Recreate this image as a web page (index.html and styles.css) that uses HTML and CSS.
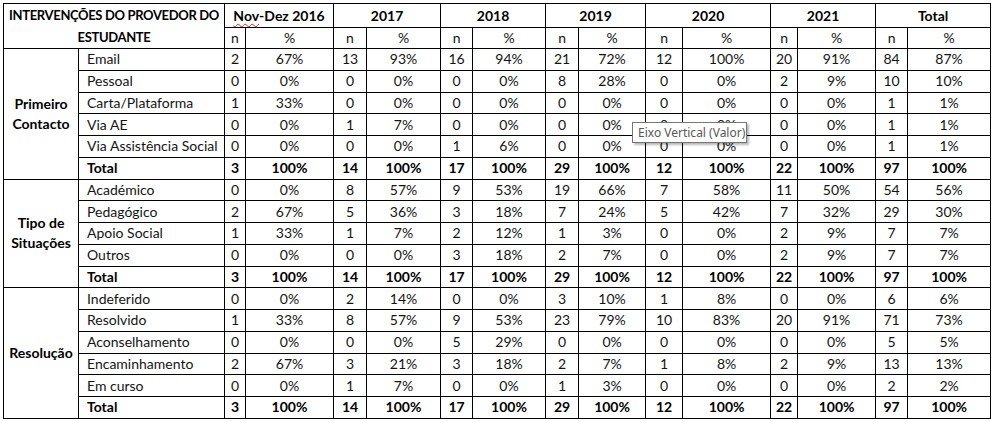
FILE: index.html
```html
<!DOCTYPE html>
<html lang="pt">
<head>
<meta charset="utf-8">
<title>Intervenções do Provedor do Estudante</title>
<link rel="stylesheet" href="styles.css">
</head>
<body>
<table class="grid">
  <colgroup>
    <col class="w-grp"><col class="w-lbl">
    <col class="w-n16"><col class="w-p16">
    <col class="w-n17"><col class="w-p17">
    <col class="w-n18"><col class="w-p18">
    <col class="w-n19"><col class="w-p19">
    <col class="w-n20"><col class="w-p20">
    <col class="w-n21"><col class="w-p21">
    <col class="w-nt"><col class="w-pt">
  </colgroup>
  <thead>
    <tr class="h1">
      <th class="title" colspan="2" rowspan="2">INTERVENÇÕES DO PROVEDOR DO<br>ESTUDANTE</th>
      <th colspan="2" class="yr"><span class="spell">Nov</span>-Dez 2016</th>
      <th colspan="2" class="yr">2017</th>
      <th colspan="2" class="yr">2018</th>
      <th colspan="2" class="yr">2019</th>
      <th colspan="2" class="yr">2020</th>
      <th colspan="2" class="yr">2021</th>
      <th colspan="2" class="yr">Total</th>
    </tr>
    <tr class="h2">
      <td class="sub sn">n</td><td class="sub sp">%</td>
      <td class="sub sn">n</td><td class="sub sp">%</td>
      <td class="sub sn">n</td><td class="sub sp">%</td>
      <td class="sub sn">n</td><td class="sub sp">%</td>
      <td class="sub sn">n</td><td class="sub sp">%</td>
      <td class="sub sn">n</td><td class="sub sp">%</td>
      <td class="sub sn">n</td><td class="sub sp">%</td>
    </tr>
  </thead>
  <tbody>
    <tr><th class="grp" rowspan="6">Primeiro<br>Contacto</th><td class="lbl">Email</td>
      <td>2</td><td>67%</td><td>13</td><td>93%</td><td>16</td><td>94%</td><td>21</td><td>72%</td><td>12</td><td>100%</td><td>20</td><td>91%</td><td>84</td><td>87%</td></tr>
    <tr><td class="lbl">Pessoal</td>
      <td>0</td><td>0%</td><td>0</td><td>0%</td><td>0</td><td>0%</td><td>8</td><td>28%</td><td>0</td><td>0%</td><td>2</td><td>9%</td><td>10</td><td>10%</td></tr>
    <tr><td class="lbl">Carta/Plataforma</td>
      <td>1</td><td>33%</td><td>0</td><td>0%</td><td>0</td><td>0%</td><td>0</td><td>0%</td><td>0</td><td>0%</td><td>0</td><td>0%</td><td>1</td><td>1%</td></tr>
    <tr><td class="lbl">Via AE</td>
      <td>0</td><td>0%</td><td>1</td><td>7%</td><td>0</td><td>0%</td><td>0</td><td>0%</td><td>0</td><td>0%</td><td>0</td><td>0%</td><td>1</td><td>1%</td></tr>
    <tr><td class="lbl">Via Assistência Social</td>
      <td>0</td><td>0%</td><td>0</td><td>0%</td><td>1</td><td>6%</td><td>0</td><td>0%</td><td>0</td><td>0%</td><td>0</td><td>0%</td><td>1</td><td>1%</td></tr>
    <tr class="tot"><td class="lbl">Total</td>
      <td>3</td><td>100%</td><td>14</td><td>100%</td><td>17</td><td>100%</td><td>29</td><td>100%</td><td>12</td><td>100%</td><td>22</td><td>100%</td><td>97</td><td>100%</td></tr>

    <tr><th class="grp" rowspan="5">Tipo de<br>Situações</th><td class="lbl">Académico</td>
      <td>0</td><td>0%</td><td>8</td><td>57%</td><td>9</td><td>53%</td><td>19</td><td>66%</td><td>7</td><td>58%</td><td>11</td><td>50%</td><td>54</td><td>56%</td></tr>
    <tr><td class="lbl">Pedagógico</td>
      <td>2</td><td>67%</td><td>5</td><td>36%</td><td>3</td><td>18%</td><td>7</td><td>24%</td><td>5</td><td>42%</td><td>7</td><td>32%</td><td>29</td><td>30%</td></tr>
    <tr><td class="lbl">Apoio Social</td>
      <td>1</td><td>33%</td><td>1</td><td>7%</td><td>2</td><td>12%</td><td>1</td><td>3%</td><td>0</td><td>0%</td><td>2</td><td>9%</td><td>7</td><td>7%</td></tr>
    <tr><td class="lbl">Outros</td>
      <td>0</td><td>0%</td><td>0</td><td>0%</td><td>3</td><td>18%</td><td>2</td><td>7%</td><td>0</td><td>0%</td><td>2</td><td>9%</td><td>7</td><td>7%</td></tr>
    <tr class="tot"><td class="lbl">Total</td>
      <td>3</td><td>100%</td><td>14</td><td>100%</td><td>17</td><td>100%</td><td>29</td><td>100%</td><td>12</td><td>100%</td><td>22</td><td>100%</td><td>97</td><td>100%</td></tr>

    <tr><th class="grp" rowspan="6">Resolução</th><td class="lbl">Indeferido</td>
      <td>0</td><td>0%</td><td>2</td><td>14%</td><td>0</td><td>0%</td><td>3</td><td>10%</td><td>1</td><td>8%</td><td>0</td><td>0%</td><td>6</td><td>6%</td></tr>
    <tr><td class="lbl">Resolvido</td>
      <td>1</td><td>33%</td><td>8</td><td>57%</td><td>9</td><td>53%</td><td>23</td><td>79%</td><td>10</td><td>83%</td><td>20</td><td>91%</td><td>71</td><td>73%</td></tr>
    <tr><td class="lbl">Aconselhamento</td>
      <td>0</td><td>0%</td><td>0</td><td>0%</td><td>5</td><td>29%</td><td>0</td><td>0%</td><td>0</td><td>0%</td><td>0</td><td>0%</td><td>5</td><td>5%</td></tr>
    <tr><td class="lbl">Encaminhamento</td>
      <td>2</td><td>67%</td><td>3</td><td>21%</td><td>3</td><td>18%</td><td>2</td><td>7%</td><td>1</td><td>8%</td><td>2</td><td>9%</td><td>13</td><td>13%</td></tr>
    <tr><td class="lbl">Em curso</td>
      <td>0</td><td>0%</td><td>1</td><td>7%</td><td>0</td><td>0%</td><td>1</td><td>3%</td><td>0</td><td>0%</td><td>0</td><td>0%</td><td>2</td><td>2%</td></tr>
    <tr class="tot"><td class="lbl">Total</td>
      <td>3</td><td>100%</td><td>14</td><td>100%</td><td>17</td><td>100%</td><td>29</td><td>100%</td><td>12</td><td>100%</td><td>22</td><td>100%</td><td>97</td><td>100%</td></tr>
  </tbody>
</table>
<div class="tooltip">Eixo Vertical (Valor)</div>
</body>
</html>
```

FILE: styles.css
```css
html, body {
  margin: 0;
  padding: 0;
  background: #ffffff;
}
body {
  position: relative;
  width: 993px;
  height: 421px;
  overflow: hidden;
  font-family: Lato, "Open Sans", "Liberation Sans", sans-serif;
  font-size: 14px;
  color: #141414;
}
.grid {
  border-collapse: collapse;
  table-layout: fixed;
  width: 987px;
  margin: 3px 0 0 3px;
}
.w-grp { width: 75px; }
.w-lbl { width: 146px; }
.w-n16 { width: 21px; }
.w-p16 { width: 88px; }
.w-n17 { width: 33px; }
.w-p17 { width: 74px; }
.w-n18 { width: 32px; }
.w-p18 { width: 73px; }
.w-n19 { width: 33px; }
.w-p19 { width: 67px; }
.w-n20 { width: 37px; }
.w-p20 { width: 88px; }
.w-n21 { width: 27px; }
.w-p21 { width: 78px; }
.w-nt { width: 32px; }
.w-pt { width: 83px; }

.grid th, .grid td {
  border: 1px solid #000;
  padding: 0;
  text-align: center;
  vertical-align: middle;
  white-space: nowrap;
  overflow: hidden;
  line-height: 20px;
}
.grid tbody tr { height: 21.75px; }
.h1 { height: 24px; }
.h2 { height: 20px; }
.grid th { font-weight: bold; color: #000; }
.grid th.title {
  line-height: 22px;
  font-size: 13px;
  letter-spacing: -0.35px;
}
.yr { border-bottom: none; }
.sub { border-top: none; }
.sp { border-left: none; }
.sn { border-right: none; }
.spell {
  text-decoration: underline wavy #e02020;
  text-decoration-skip-ink: none;
  text-underline-offset: 2px;
  text-decoration-thickness: 1px;
}
.grp { line-height: 22px; }
.grid td.lbl {
  text-align: left;
  padding-left: 8px;
}
.tot td { font-weight: bold; color: #000; }

.tooltip {
  position: absolute;
  left: 632px;
  top: 122px;
  width: 115px;
  height: 21px;
  box-sizing: border-box;
  border: 1px solid #767676;
  background: #ffffff;
  box-shadow: 2px 2px 2px rgba(0, 0, 0, 0.28);
  font-family: "Noto Sans", "Open Sans", sans-serif;
  font-size: 12px;
  line-height: 19px;
  color: #575757;
  padding-left: 5px;
  white-space: nowrap;
}
```
